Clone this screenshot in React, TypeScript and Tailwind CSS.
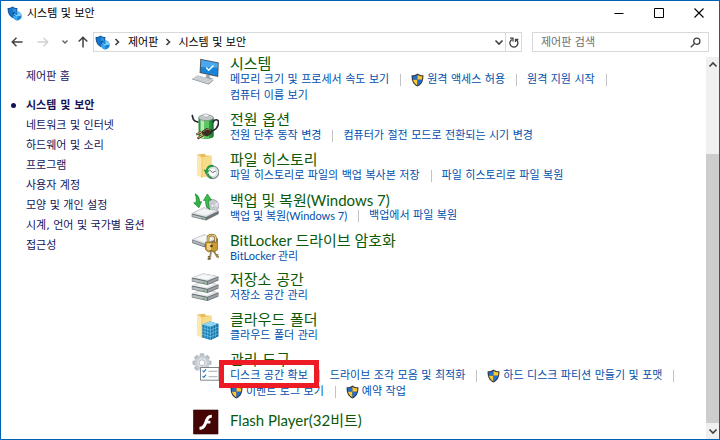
import type { ReactNode } from "react";

type Task = { label: string; shield?: boolean; end?: boolean; marked?: boolean };
type Section = { title: string; icon: ReactNode; lines: Task[][] };

const KO = "font-['DejaVu_Sans','Noto_Sans_CJK_KR',sans-serif]";
const MIXED = "font-['Lato','Noto_Sans_CJK_KR',sans-serif]";

const hasLatin = (text: string) => /[A-Za-z]/.test(text);

function UacShield() {
  return (
    <svg viewBox="0 0 13 14" className="h-3.5 w-[13px] shrink-0" aria-hidden="true">
      <path d="M6.5.4C5 1.700 2.800 2.200.6 2.300.4 7.500 1.800 11.400 6.500 13.600c4.700-2.200 6.100-6.100 5.900-11.300C10.200 2.200 8 1.700 6.500.4Z" fill="#34383d" />
      <path d="M6.500 1.700C5.200 2.700 3.500 3.200 1.700 3.300c0 1.300.1 2.500.3 3.500h4.500Z" fill="#1f6fd6" />
      <path d="M6.500 1.700c1.300 1 3 1.500 4.800 1.600 0 1.300-.1 2.500-.3 3.500H6.500Z" fill="#fcc92e" />
      <path d="M2 6.800c.6 2.500 2 4.400 4.500 5.600V6.800Z" fill="#fcc92e" />
      <path d="M11 6.800c-.6 2.500-2 4.400-4.500 5.600V6.800Z" fill="#1f6fd6" />
    </svg>
  );
}

function SecurityIcon() {
  return (
    <svg viewBox="0 0 15 15" className="size-[15px] shrink-0" aria-hidden="true">
      <path d="M5.500.5C4 1.600 2.300 2 .6 2c-.1 4.500 1.200 8 5.400 10.200C9.500 10 10.600 6.500 10.300 2 8.500 2 7 1.600 5.500.5Z" fill="#0c4f94" />
      <path d="M5.500 1.500C4.200 2.400 3 2.800 1.500 2.900c0 3.700 1.100 6.500 4.400 8.300Z" fill="#1677c9" />
      <path d="M5.500 1.500C6.800 2.500 8 2.800 9.500 2.900c0 1.600 0 2.600-.4 3.700L5.700 6Z" fill="#2d8fe0" />
      <circle cx="10.300" cy="10" r="4.400" fill="#1b83d4" />
      <path d="M10.300 10V5.600A4.400 4.400 0 0 1 14.700 10Z" fill="#6cc3f5" />
      <path d="M10.300 10H5.900a4.400 4.400 0 0 0 4.400 4.400Z" fill="#38a9ec" />
      <path d="M7.500 8.500 10.300 10l3-2" stroke="#a9defa" strokeWidth=".8" fill="none" />
    </svg>
  );
}

function Glyph({ children }: { children: ReactNode }) {
  return (
    <svg viewBox="0 0 28 28" className="size-7 shrink-0" aria-hidden="true">
      {children}
    </svg>
  );
}

const folder = (
  <>
    <path d="M6 1.500 14 .8l.6 1.700 5.800.2V22L11 24.500 6 22Z" fill="#e9bf5c" />
    <path d="M11 4.500 20.400 2.700V22L11 24.500Z" fill="#f8dc8c" />
    <path d="M6 1.500 11 4.500v20L6 22Z" fill="#fbe8ae" />
    <path d="M11 4.500v20" stroke="#e2b14a" strokeWidth=".6" />
  </>
);

const systemIcon = (
  <Glyph>
    <path d="m9.300 1.800 18.500 3.700-.6 14.600L8.600 16Z" fill="#4b5560" />
    <path d="m10.300 3 16.500 3.300-.5 12.500L9.700 15.200Z" fill="#1784dc" />
    <path d="m10.300 3 16.500 3.300-.2 4.500L10 10Z" fill="#4aa9ee" />
    <path d="m15.300 10.500 2.400 2.700 4.800-4.700" stroke="#fff" strokeWidth="1.500" fill="none" />
    <path d="m15 17.500 4 .9-.4 2 4.200 1.300-3.500.7-6-1.700 2-.8Z" fill="#9aa2a9" />
    <path d="m1 22 5.500-3.800L22.500 23l-4.800 4.200Z" fill="#b8bec3" />
    <path d="m2.500 22 16 4.500M4 21l16 4.300M5.500 19.700l15.500 4.200" stroke="#f1f3f4" strokeWidth=".7" strokeDasharray="1.600 .7" />
    <path d="m1 22 16.700 5.200 4.800-4.200" stroke="#727a80" strokeWidth=".6" fill="none" />
  </Glyph>
);

const powerIcon = (
  <Glyph>
    <path d="M7.500 4.500h15V23c-1 4-14 4-15 0Z" fill="#27953b" />
    <path d="M9.500 5h3.500v20.500c-2-.3-3.200-1-3.500-1.800Z" fill="#b5e9b0" />
    <path d="M13 5h5v20.800h-5Z" fill="#5cc662" />
    <path d="M20.500 5h2v18c-.3 1-1 1.600-2 2Z" fill="#1c7833" />
    <ellipse cx="15" cy="4.700" rx="7.500" ry="2.900" fill="#c2c8ca" stroke="#788084" strokeWidth=".7" />
    <ellipse cx="15" cy="2.500" rx="3" ry="1.600" fill="#f0f2f3" stroke="#8c9396" strokeWidth=".5" />
    <path d="M1 2c1 1.500.3 3 1.800 5 1 1.500 3.300 1.800 4.700 2.200M22 9.500c1-3.500 5.800-4 5.500.5-.3 4-3.500 7-7 8.300" stroke="#25282c" strokeWidth="1.700" fill="none" />
    <path d="m10.500 18.500 5-3.500 5.300 1.800.5 3.200-5 3.500-4.700-1.500Z" fill="#3a2d22" />
    <path d="m12 18.800 4-2.600 3.500 1" stroke="#9a7a53" strokeWidth=".9" fill="none" />
    <path d="m11.300 18.800-6 2.700M12.500 22l-6 3.500" stroke="#4a3a24" strokeWidth="2.200" />
    <path d="m11 18.700-5.300 2.400M12.300 21.800l-5 3" stroke="#e0b860" strokeWidth="1" />
  </Glyph>
);

const historyIcon = (
  <Glyph>
    {folder}
    <circle cx="21.500" cy="19.300" r="6.300" fill="#e8ebed" stroke="#848b90" strokeWidth="1.100" />
    <circle cx="21.500" cy="19.300" r="4.300" fill="#fbfcfc" stroke="#b5babd" strokeWidth=".5" />
    <path d="m18.700 17 2.900 2.500 3.300-1.500" stroke="#555d63" strokeWidth=".9" fill="none" />
    <path d="M22.500 13c-3.500-.6-6 1.500-6.800 4.500" stroke="#279a3d" strokeWidth="2" fill="none" />
    <path d="m12.500 16.500 6.300 1-3.800 4Z" fill="#279a3d" />
    <path d="M16.500 20.500c.7 2.300 2 3.800 4.500 4.600" stroke="#279a3d" strokeWidth="1.800" fill="none" />
  </Glyph>
);

const backupIcon = (
  <Glyph>
    <circle cx="21.500" cy="12.700" r="6.200" fill="#c9ccd2" stroke="#888e94" strokeWidth=".7" />
    <path d="m21.500 12.700 5-3.500a6 6 0 0 1 1 4.500Z" fill="#eadff2" />
    <circle cx="21.500" cy="12.700" r="1.600" fill="#fff" stroke="#8e9499" strokeWidth=".6" />
    <path d="m.7 20.500 12-6 15 3.300V21L15 27.600.7 24Z" fill="#6b7276" />
    <path d="m.7 20.500 12-6 15 3.300L15 24Z" fill="#d8dcde" />
    <path d="m4 20 8.500-4.200 11 2.400L14.500 22.500Z" fill="#f2f4f4" />
    <path d="m1.300 21.700 13 3.300v1.700l-13-3.300Z" fill="#b9bfc2" />
    <path d="m10 25.200 3 .7" stroke="#3bc84d" strokeWidth="1" />
    <path d="M4 .8c3.200 1.200 4.500 4 4.600 8.200l2-.4-2.700 6.200L2.700 10l2.500-.4C5.500 6.300 5.200 3.200 4 .8Z" fill="#2fb344" stroke="#15842a" strokeWidth=".7" />
    <path d="M19 16.500c-3.500-1.500-4.700-5-4.300-9.200l-2.200.2L16.400 1l4 6-2.500.1c-.5 3.300-.3 6.500 1.100 9.400Z" fill="#39bd4d" stroke="#15842a" strokeWidth=".7" />
  </Glyph>
);

const lockIcon = (
  <Glyph>
    <path d="m1 6.500 12-5 14 3.700V8.500L14 14.500 1 10Z" fill="#73797d" />
    <path d="m1 6.500 12-5 14 3.700-13 5.800Z" fill="#dfe2e3" />
    <path d="m4.500 6.300 8.600-3.500 9.500 2.500-8.600 3.900Z" fill="#f5f6f6" />
    <path d="m1.400 7.600 12 4v1.700l-12-4Z" fill="#b5babd" />
    <path d="M17 10V5.500c0-4.700 7.500-4.700 7.500 0V10" stroke="#8a6a22" strokeWidth="2.600" fill="none" />
    <path d="M17 10V5.500c0-4.700 7.500-4.700 7.500 0V10" stroke="#edd583" strokeWidth="1.200" fill="none" />
    <path d="M14.500 9.200h12v7.500l-2.500 2H17l-2.500-2Z" fill="#c99a35" stroke="#86621c" strokeWidth=".7" />
    <path d="M16 10.300h4v7h-2.500L16 16Z" fill="#edcf7c" />
    <circle cx="20.500" cy="13" r="1.300" fill="#51390d" />
    <path d="m20 17-1 9.500m-.2-2.500-2-.3m1.700 2.500-1.800-.4" stroke="#74623a" strokeWidth="1.700" fill="none" />
    <path d="m22 17 4.500 7.200m-1-1.600 1.800-1m-.8 2.800 1.500-.8" stroke="#98824b" strokeWidth="1.700" fill="none" />
    <path d="m20.300 18-.8 7.500" stroke="#e1d5b2" strokeWidth=".6" />
  </Glyph>
);

const storageIcon = (
  <Glyph>
    {[16, 8, 0].map((y) => (
      <g key={y} transform={`translate(0 ${y})`}>
        <path d="m.8 4.800 11-4.200 15.700 2.600V7.500L16.500 12 .8 8.500Z" fill="#6b7175" />
        <path d="m.8 4.600 11-4 15.700 2.600-11 4.500Z" fill="#e1e4e5" />
        <path d="m4.500 4.400 7.600-2.700 11 1.800-7.300 2.900Z" fill="#f7f8f8" />
        <path d="m1.300 5.700 14.500 3v2.200l-14.500-3Z" fill="#b7bcbf" />
        <path d="m17 8.500 10-4v2.300l-10 4.200Z" fill="#999fa3" />
        <path d="m12 9.100 2 .4" stroke="#3ac950" strokeWidth="1" />
      </g>
    ))}
  </Glyph>
);

const cloudIcon = (
  <Glyph>
    {folder}
    <path d="m11.300 11.500 7.700-3 8.300 2.200v12.600L19.500 27l-8.200-2.500Z" fill="#1b7fb5" />
    <path d="m11.300 11.500 7.700-3 8.300 2.200-7.800 3.300Z" fill="#8fd6f3" />
    <path d="m19.500 14 7.800-3.300v12.600L19.500 27Z" fill="#1670a4" />
    <path d="m11.300 14.700 8.200 2.500 7.800-3.200M11.300 18l8.200 2.500 7.800-3.200M11.300 21.300l8.200 2.500 7.800-3.200M14 12.300v13m2.700-12.200v13M19.500 14v13m2.600-14v12.800m2.600-14v12.700" stroke="#79cbed" strokeWidth=".65" fill="none" />
  </Glyph>
);

const toolsIcon = (
  <Glyph>
    <g fill="#b5bdc5">
      {[0, 45, 90, 135].map((turn) => (
        <rect key={turn} x="8.700" y=".3" width="4.600" height="19" rx="1" transform={`rotate(${turn} 11 9.800)`} />
      ))}
    </g>
    <circle cx="11" cy="9.800" r="7.300" fill="#c5ccd3" />
    <circle cx="11" cy="9.800" r="5" fill="#dbe0e5" />
    <circle cx="11" cy="9.800" r="2.900" fill="#fff" stroke="#a4adb6" strokeWidth=".7" />
    <path d="M9.500 14.500H28v12.700H9.500Z" fill="#fff" stroke="#717980" strokeWidth=".9" />
    <path d="m11.500 17.500 1.300 1.400 2.300-2.700M11.500 23l1.300 1.400 2.300-2.700" stroke="#2176cb" strokeWidth="1.100" fill="none" />
    <path d="M17.500 18.200h9M17.500 23.700h9" stroke="#a3abb2" strokeWidth="1.100" />
  </Glyph>
);

const flashIcon = (
  <Glyph>
    <path d="M2.500 1h24.500v24H2.500Z" fill="#450505" stroke="#2b0202" strokeWidth=".6" />
    <path d="M20.800 5.800v3c-2.300.1-3 1.200-3.700 2.900h2.300v2.800h-3.400c-1.300 3.600-3 6.300-7.500 6.300v-3c3-.1 3.900-2.200 5-5.100 1.300-3.600 2.700-6.900 7.300-6.900Z" fill="#fff" />
  </Glyph>
);

const sections: Section[] = [
  {
    title: "시스템",
    icon: systemIcon,
    lines: [
      [
        { label: "메모리 크기 및 프로세서 속도 보기" },
        { label: "원격 액세스 허용", shield: true },
        { label: "원격 지원 시작", end: true },
      ],
      [{ label: "컴퓨터 이름 보기" }],
    ],
  },
  { title: "전원 옵션", icon: powerIcon, lines: [[{ label: "전원 단추 동작 변경" }, { label: "컴퓨터가 절전 모드로 전환되는 시기 변경" }]] },
  { title: "파일 히스토리", icon: historyIcon, lines: [[{ label: "파일 히스토리로 파일의 백업 복사본 저장" }, { label: "파일 히스토리로 파일 복원" }]] },
  { title: "백업 및 복원(Windows 7)", icon: backupIcon, lines: [[{ label: "백업 및 복원(Windows 7)" }, { label: "백업에서 파일 복원" }]] },
  { title: "BitLocker 드라이브 암호화", icon: lockIcon, lines: [[{ label: "BitLocker 관리" }]] },
  { title: "저장소 공간", icon: storageIcon, lines: [[{ label: "저장소 공간 관리" }]] },
  { title: "클라우드 폴더", icon: cloudIcon, lines: [[{ label: "클라우드 폴더 관리" }]] },
  {
    title: "관리 도구",
    icon: toolsIcon,
    lines: [
      [
        { label: "디스크 공간 확보", marked: true },
        { label: "드라이브 조각 모음 및 최적화" },
        { label: "하드 디스크 파티션 만들기 및 포맷", shield: true, end: true },
      ],
      [{ label: "이벤트 로그 보기", shield: true }, { label: "예약 작업", shield: true }],
    ],
  },
  { title: "Flash Player(32비트)", icon: flashIcon, lines: [] },
];

const categories = [
  "시스템 및 보안",
  "네트워크 및 인터넷",
  "하드웨어 및 소리",
  "프로그램",
  "사용자 계정",
  "모양 및 개인 설정",
  "시계, 언어 및 국가별 옵션",
  "접근성",
];

function TaskLine({ tasks }: { tasks: Task[] }) {
  return (
    <ul className="flex h-4 items-center whitespace-nowrap">
      {tasks.map((task, i) => (
        <li key={task.label} className="flex items-center">
          <a href="#" className={`relative flex items-center gap-[3px] text-[11px] leading-4 text-[#0050ac] ${hasLatin(task.label) ? MIXED : KO}`}>
            {task.shield && <UacShield />}
            {task.label}
            {task.marked && <span className="absolute -inset-x-[11px] -top-2 -bottom-1 z-10 border-[5px] border-[#ed1c24]" />}
          </a>
          {(i < tasks.length - 1 || task.end) && <span className="mr-[10px] ml-[11px] h-3 w-px bg-[#c4c4c4]" />}
        </li>
      ))}
    </ul>
  );
}

function Chevron({ d, label }: { d: string; label: string }) {
  return (
    <button type="button" aria-label={label} className="flex h-4 w-3 shrink-0 items-center justify-center text-[#404040]">
      <svg viewBox="0 0 10 10" className="size-2.5" fill="none" stroke="currentColor" strokeWidth="1.600">
        <path d={d} />
      </svg>
    </button>
  );
}

const RIGHT = "m3.500 2 3 3-3 3";
const DOWN = "m1.500 3.500 3.500 3.500 3.500-3.500";
const UP = "m1.500 6.500 3.500-3.500 3.500 3.500";

export default function App() {
  return (
    <div className={`flex h-screen flex-col overflow-hidden border border-[#0063b1] bg-white text-[11px] leading-4 text-black ${KO}`}>
      <header className="shrink-0">
        <div className="flex h-6 items-center pl-1.5">
          <SecurityIcon />
          <h1 className="ml-[5px] flex-1 pt-0.5">시스템 및 보안</h1>
          <div className="flex">
            <button type="button" aria-label="최소화" className="flex h-6 w-10 items-center justify-center">
              <svg viewBox="0 0 10 10" className="size-2.5"><path d="M.5 5.500h9" stroke="#000" /></svg>
            </button>
            <button type="button" aria-label="최대화" className="flex h-6 w-10 items-center justify-center">
              <svg viewBox="0 0 10 10" className="size-2.5"><path d="M.5.5h9v9h-9Z" fill="none" stroke="#000" /></svg>
            </button>
            <button type="button" aria-label="닫기" className="flex h-6 w-10 items-center justify-center">
              <svg viewBox="0 0 10 10" className="size-2.5"><path d="m.5.5 9 9m0-9-9 9" stroke="#000" strokeWidth="1.100" /></svg>
            </button>
          </div>
        </div>
        <div className="flex items-center pt-[7px] pr-2.5 pb-[3px] pl-2.5">
          <nav aria-label="탐색" className="flex w-[82px] shrink-0 items-center">
            <button type="button" aria-label="뒤로" className="flex w-[26px] text-[#404040]">
              <svg viewBox="0 0 12 12" className="size-3" fill="none" stroke="currentColor" strokeWidth="1.400"><path d="M11.500 6H1.200M5.500 1.700 1.200 6l4.300 4.300" /></svg>
            </button>
            <button type="button" aria-label="앞으로" className="flex w-[22px] text-[#d0d0d0]">
              <svg viewBox="0 0 12 12" className="size-3" fill="none" stroke="currentColor" strokeWidth="1.300"><path d="M.5 6h10.300M6.500 1.700 10.800 6l-4.300 4.300" /></svg>
            </button>
            <button type="button" aria-label="최근 위치" className="flex w-[18px] justify-center text-[#606060]">
              <svg viewBox="0 0 8 8" className="mr-1.5 size-2" fill="none" stroke="currentColor" strokeWidth="1.300"><path d="m1.500 2.500 2.500 2.500 2.500-2.500" /></svg>
            </button>
            <button type="button" aria-label="위로" className="flex text-[#404040]">
              <svg viewBox="0 0 12 12" className="size-3" fill="none" stroke="currentColor" strokeWidth="1.500"><path d="M6 11.500V1.200M1.700 5.500 6 1.200l4.300 4.300" /></svg>
            </button>
          </nav>
          <div className="flex h-5 min-w-0 flex-1 items-center border border-[#d9d9d9] pl-px">
            <SecurityIcon />
            <div className="mx-px"><Chevron d={RIGHT} label="폴더 목록" /></div>
            <a href="#" className="ml-1 pt-0.5">제어판</a>
            <div className="mx-1"><Chevron d={RIGHT} label="제어판 항목" /></div>
            <a href="#" className="flex-1 pt-0.5">시스템 및 보안</a>
            <Chevron d={DOWN} label="이전 위치" />
            <button type="button" aria-label="새로 고침" className="flex h-full w-4 items-center justify-center border-l border-[#d9d9d9]">
              <svg viewBox="0 0 10 11" className="h-[11px] w-2.5" fill="none" stroke="#404040" strokeWidth="1.300">
                <path d="M3 2.500A4 4 0 1 0 7.500 3M1 1.200h3v3.300M6.500 5V2.500H9.300" />
              </svg>
            </button>
          </div>
          <form className="ml-2.5 flex h-5 w-[177px] items-center border border-[#d9d9d9] pr-[7px] pl-2" role="search">
            <input
              type="search"
              aria-label="제어판 검색"
              placeholder="제어판 검색"
              className="w-full min-w-0 bg-transparent pt-0.5 leading-4 outline-none placeholder:text-[#6d6d6d]"
            />
            <svg viewBox="0 0 11 11" className="size-[11px] shrink-0" fill="none" stroke="#404040" strokeWidth="1.300" aria-hidden="true">
              <circle cx="6.800" cy="4.200" r="3.100" />
              <path d="M4.500 6.500.8 10.200" />
            </svg>
          </form>
        </div>
      </header>

      <div className="flex min-h-0 flex-1">
        <aside className="w-[190px] shrink-0 pt-[13px] pl-[25px] text-[#14145a]">
          <a href="#" className="block leading-[18px]">제어판 홈</a>
          <ul className="mt-2.5">
            {categories.map((name, i) => (
              <li key={name} className="relative leading-5">
                {i === 0 && <span className="absolute top-[7px] -left-[15px] size-[5px] rounded-full bg-[#14145a]" />}
                <a href="#" className={i === 0 ? "font-bold" : ""}>{name}</a>
              </li>
            ))}
          </ul>
        </aside>

        <main className="flex min-w-0 flex-1 flex-col gap-2 overflow-hidden pt-px">
          {sections.map((section) => (
            <section key={section.title} className="flex shrink-0 gap-[11px]">
              <div className="h-8 pt-px">{section.icon}</div>
              <div className={section.lines.length ? "" : "pt-1"}>
                <h2 className={`text-[15px] leading-4 whitespace-nowrap text-[#0a5a0a] ${hasLatin(section.title) ? MIXED : KO}`}>
                  <a href="#">{section.title}</a>
                </h2>
                {section.lines.map((tasks) => (
                  <TaskLine key={tasks[0].label} tasks={tasks} />
                ))}
              </div>
            </section>
          ))}
        </main>

        <div className="mt-0.5 flex w-[13px] shrink-0 flex-col items-center bg-[#f0f0f0]">
          <Chevron d={UP} label="위로 스크롤" />
          <div className="flex-[3]" />
          <div className="w-full flex-[10] bg-[#cdcdcd]" />
          <Chevron d={DOWN} label="아래로 스크롤" />
        </div>
      </div>
    </div>
  );
}
